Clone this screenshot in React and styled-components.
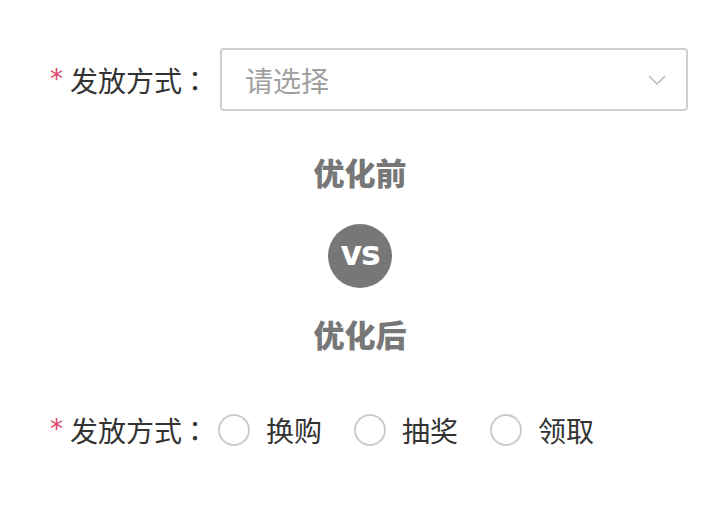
import styled, { createGlobalStyle } from 'styled-components';

const GlobalStyle = createGlobalStyle`
  body {
    margin: 0;
    background: #ffffff;
    font-family: "Noto Sans CJK SC", "Noto Sans", sans-serif;
    color: #333333;
  }
`;

const Page = styled.div`
  width: 720px;
  height: 512px;
  box-sizing: border-box;
  padding: 48px 32px 0 50px;
  display: flex;
  flex-direction: column;
`;

const FormRow = styled.div`
  display: flex;
  align-items: center;
  height: ${props => props.height}px;
`;

const Label = styled.div`
  width: ${props => props.width}px;
  display: flex;
  align-items: center;
  font-size: 28px;
  line-height: 1;
  color: #333;
  white-space: nowrap;
`;

const Star = styled.span`
  color: #e0416b;
  font-family: "DejaVu Sans", sans-serif;
  font-size: 26px;
  width: 20px;
  position: relative;
  top: -1px;
`;

const Colon = styled.span`
  font-family: "Noto Sans CJK TC", sans-serif;
  margin-left: -1px;
`;

const Select = styled.div`
  width: 468px;
  height: 63px;
  box-sizing: border-box;
  border: 2px solid #cfcfcf;
  border-radius: 4px;
  display: flex;
  align-items: center;
  justify-content: space-between;
  padding: 0 20px 0 23px;
  font-size: 28px;
  color: #a0a0a0;
`;

const Compare = styled.div`
  display: flex;
  flex-direction: column;
  align-items: center;
  margin-left: -50px;
  margin-right: -32px;
  margin-top: 45px;
`;

const Title = styled.div`
  font-size: 31px;
  line-height: 31px;
  font-weight: 900;
  color: #777777;
`;

const VsBadge = styled.div`
  width: 64px;
  height: 64px;
  border-radius: 50%;
  background: #777777;
  color: #ffffff;
  display: flex;
  align-items: center;
  justify-content: center;
  margin: 37px 0 30px;
  font-family: "DejaVu Sans", sans-serif;
  font-weight: 700;
  font-size: 33px;
  letter-spacing: -1px;
  padding-bottom: 5px;
  box-sizing: border-box;
`;

const RadioRow = styled(FormRow)`
  margin-top: 65px;
`;

const RadioGroup = styled.div`
  display: flex;
  align-items: center;
  gap: 32px;
`;

const RadioItem = styled.label`
  display: flex;
  align-items: center;
  gap: 16px;
  font-size: 28px;
  line-height: 1;
  color: #333;
`;

const RadioCircle = styled.span`
  width: 32px;
  height: 32px;
  box-sizing: border-box;
  border-radius: 50%;
  border: 2px solid #cccccc;
  background: #fff;
`;

const Chevron = () => (
  <svg width="18" height="10" viewBox="0 0 18 10" fill="none">
    <path d="M1 1 L9 9 L17 1" stroke="#bdbdbd" strokeWidth="1.6" />
  </svg>
);

const options = ['换购', '抽奖', '领取'];

export default function App() {
  return (
    <>
      <GlobalStyle />
      <Page>
        <FormRow height={63}>
          <Label width={170}>
            <Star>*</Star>发放方式<Colon>：</Colon>
          </Label>
          <Select>
            <span>请选择</span>
            <Chevron />
          </Select>
        </FormRow>
        <Compare>
          <Title>优化前</Title>
          <VsBadge>vs</VsBadge>
          <Title>优化后</Title>
        </Compare>
        <RadioRow height={32}>
          <Label width={168}>
            <Star>*</Star>发放方式<Colon>：</Colon>
          </Label>
          <RadioGroup>
            {options.map(o => (
              <RadioItem key={o}>
                <RadioCircle />
                {o}
              </RadioItem>
            ))}
          </RadioGroup>
        </RadioRow>
      </Page>
    </>
  );
}
